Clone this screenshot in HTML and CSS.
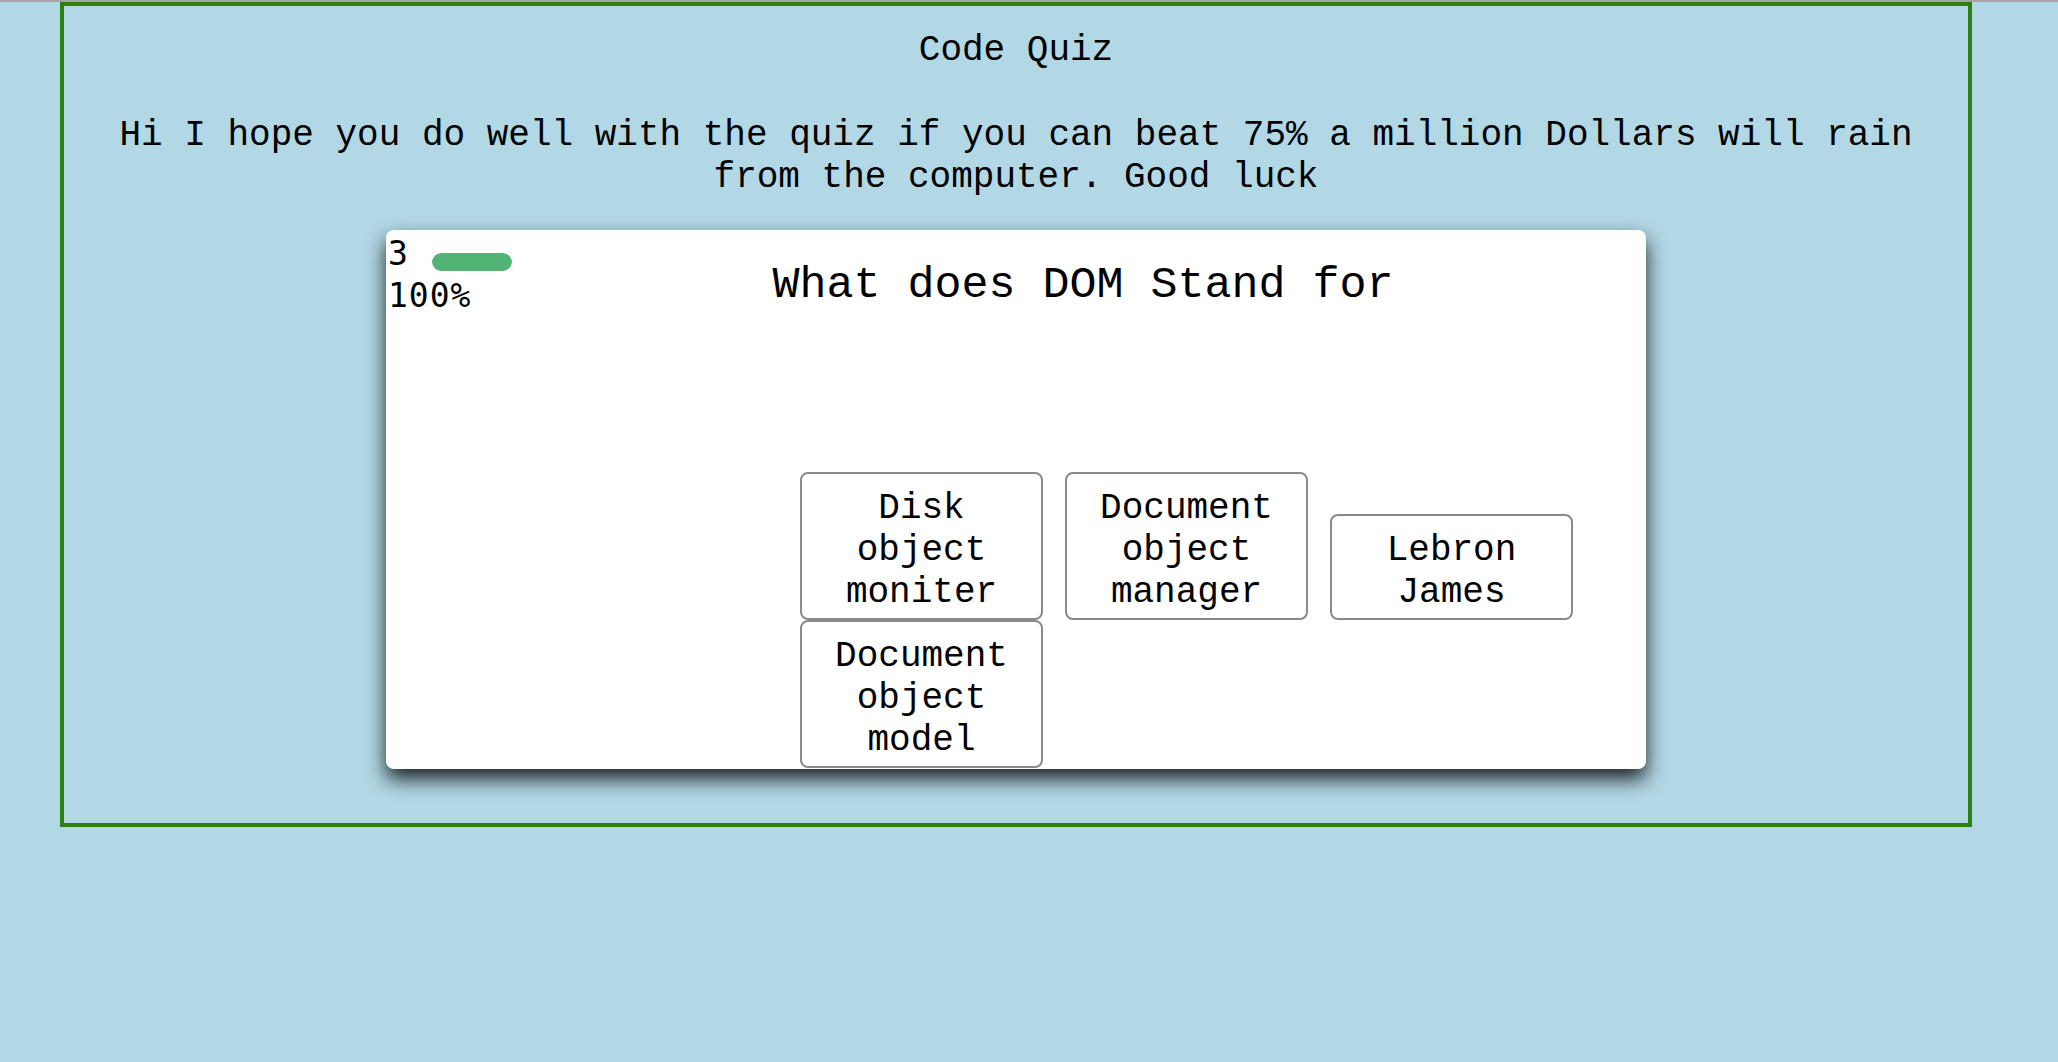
FILE: index.html
```html
<!DOCTYPE html>
<html lang="en">
<head>
<meta charset="utf-8">
<title>Code Quiz</title>
<link rel="stylesheet" href="styles.css">
</head>
<body>
  <div class="frame">
    <h1 class="page-title">Code Quiz</h1>
    <p class="intro">Hi I hope you do well with the quiz if you can beat 75% a million Dollars will rain from the computer. Good luck</p>
    <div class="card">
      <div class="hud">
        <div class="hud-row">
          <span class="count">3</span>
          <span class="bar"><span class="bar-fill" style="width:100%"></span></span>
        </div>
        <div class="percent">100%</div>
      </div>
      <div class="main">
        <h2 class="question">What does DOM Stand for</h2>
        <div class="answers">
          <button class="answer">Disk object moniter</button>
          <button class="answer">Document object manager</button>
          <button class="answer">Lebron James</button>
          <button class="answer">Document object model</button>
        </div>
      </div>
    </div>
  </div>
</body>
</html>
```

FILE: styles.css
```css
html, body {
  margin: 0;
  padding: 0;
}

body {
  background: #b2d7e5;
  border-top: 2px solid #a4a4a4;
  font-family: "Courier New", "Nimbus Mono PS", "FreeMono", "Liberation Mono", monospace;
  color: #000;
  min-height: 1060px;
}

.frame {
  margin-left: 60px;
  width: 1912px;
  box-sizing: border-box;
  border: 4px solid #2b800f;
  padding: 24px 0 54px;
  text-align: center;
}

.page-title {
  margin: 0;
  font-size: 36px;
  line-height: 42px;
  font-weight: normal;
}

.intro {
  margin: 43px 0 0;
  padding: 0 45px;
  font-size: 36px;
  line-height: 42px;
}

.card {
  width: 1260px;
  margin: 31px auto 0;
  background: #fff;
  border-radius: 8px;
  box-shadow: 0 10px 20px rgba(0, 0, 0, 0.85);
  display: flex;
  text-align: left;
  padding-bottom: 1px;
}

.hud {
  width: 134px;
  flex: none;
  padding: 3px 0 0 2px;
  box-sizing: border-box;
  font-family: "DejaVu Sans Mono", monospace;
  font-size: 33px;
  line-height: 42px;
  letter-spacing: 1px;
}

.hud-row {
  display: flex;
  align-items: flex-start;
}

.count {
  width: 44px;
}

.bar {
  display: block;
  margin-top: 20px;
  width: 80px;
  height: 18px;
  border-radius: 9px;
  background: #e6e6e6;
  overflow: hidden;
}

.bar-fill {
  display: block;
  height: 100%;
  background: #52b474;
  border-radius: 9px;
}

.main {
  flex: 1;
  min-width: 0;
}

.question {
  margin: 30px 0 0;
  font-size: 45px;
  line-height: 52px;
  font-weight: normal;
  text-align: center;
}

.answers {
  margin-top: 160px;
  padding-left: 280px;
  display: flex;
  flex-wrap: wrap;
  align-items: last baseline;
  column-gap: 22px;
  row-gap: 0;
}

.answer {
  width: 243px;
  box-sizing: border-box;
  margin: 0;
  padding: 14px 12px 4px;
  border: 2px solid #8a8a8a;
  border-radius: 8px;
  background: #fff;
  color: #000;
  font-family: "Courier New", "Nimbus Mono PS", "FreeMono", "Liberation Mono", monospace;
  font-size: 36px;
  line-height: 42px;
  text-align: center;
}
```
